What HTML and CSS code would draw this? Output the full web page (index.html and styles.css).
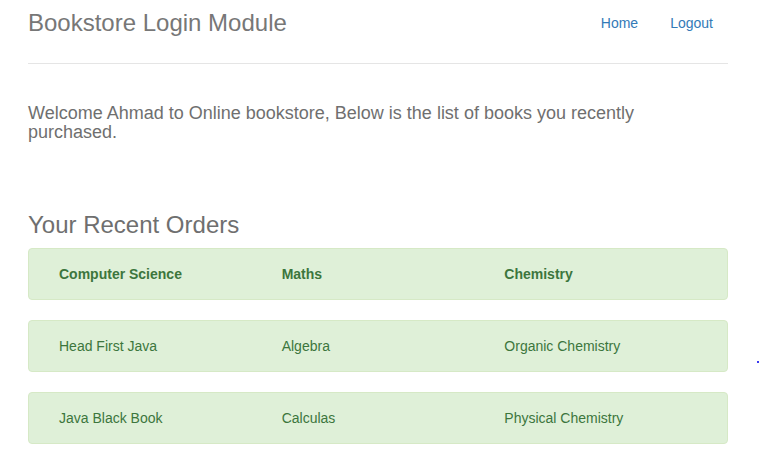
FILE: index.html
```html
<!DOCTYPE html>
<html lang="en">
<head>
<meta charset="utf-8">
<title>Bookstore Login Module</title>
<link rel="stylesheet" href="styles.css">
</head>
<body>
<div class="container">
  <header class="header">
    <h3 class="brand">Bookstore Login Module</h3>
    <nav class="nav">
      <a href="#" class="nav-link">Home</a>
      <a href="#" class="nav-link">Logout</a>
    </nav>
  </header>

  <p class="welcome">Welcome Ahmad to Online bookstore, Below is the list of books you recently purchased.</p>

  <h3 class="section-title">Your Recent Orders</h3>

  <div class="alert alert-head">
    <div class="col">Computer Science</div>
    <div class="col">Maths</div>
    <div class="col">Chemistry</div>
  </div>
  <div class="alert">
    <div class="col">Head First Java</div>
    <div class="col">Algebra</div>
    <div class="col">Organic Chemistry</div>
  </div>
  <div class="alert">
    <div class="col">Java Black Book</div>
    <div class="col">Calculas</div>
    <div class="col">Physical Chemistry</div>
  </div>
</div>
<span class="dot"></span>
</body>
</html>
```

FILE: styles.css
```css
html, body {
  margin: 0;
  padding: 0;
  background: #fff;
}

body {
  font-family: "Liberation Sans", Arial, Helvetica, sans-serif;
  font-size: 14px;
  line-height: 20px;
  color: #333;
  padding-top: 3px;
}

.container {
  width: 700px;
  margin-left: 28px;
}

.header {
  display: flex;
  justify-content: space-between;
  align-items: flex-start;
  padding-bottom: 20px;
  border-bottom: 1px solid #e5e5e5;
}

.brand {
  margin: 0;
  font-size: 24px;
  font-weight: normal;
  line-height: 40px;
  color: #777;
}

.nav {
  display: flex;
  gap: 2px;
}

.nav-link {
  display: block;
  padding: 10px 15px;
  line-height: 20px;
  color: #337ab7;
  text-decoration: none;
}

.welcome {
  margin: 40px 0 0 0;
  font-size: 18px;
  line-height: 19px;
  color: #6f6f6f;
}

.section-title {
  margin: 70px 0 10px 0;
  font-size: 24px;
  font-weight: normal;
  line-height: 26.4px;
  color: #6f6f6f;
}

.alert {
  display: grid;
  grid-template-columns: 1fr 1fr 1fr;
  padding: 15px;
  margin-bottom: 20px;
  background: #dff0d8;
  border: 1px solid #d6e9c6;
  border-radius: 4px;
  color: #3c763d;
}

.alert .col {
  padding: 0 15px;
}

.alert-head {
  font-weight: bold;
}

.dot {
  position: absolute;
  left: 757px;
  top: 361px;
  width: 2px;
  height: 2px;
  background: #3a3af0;
}
```
